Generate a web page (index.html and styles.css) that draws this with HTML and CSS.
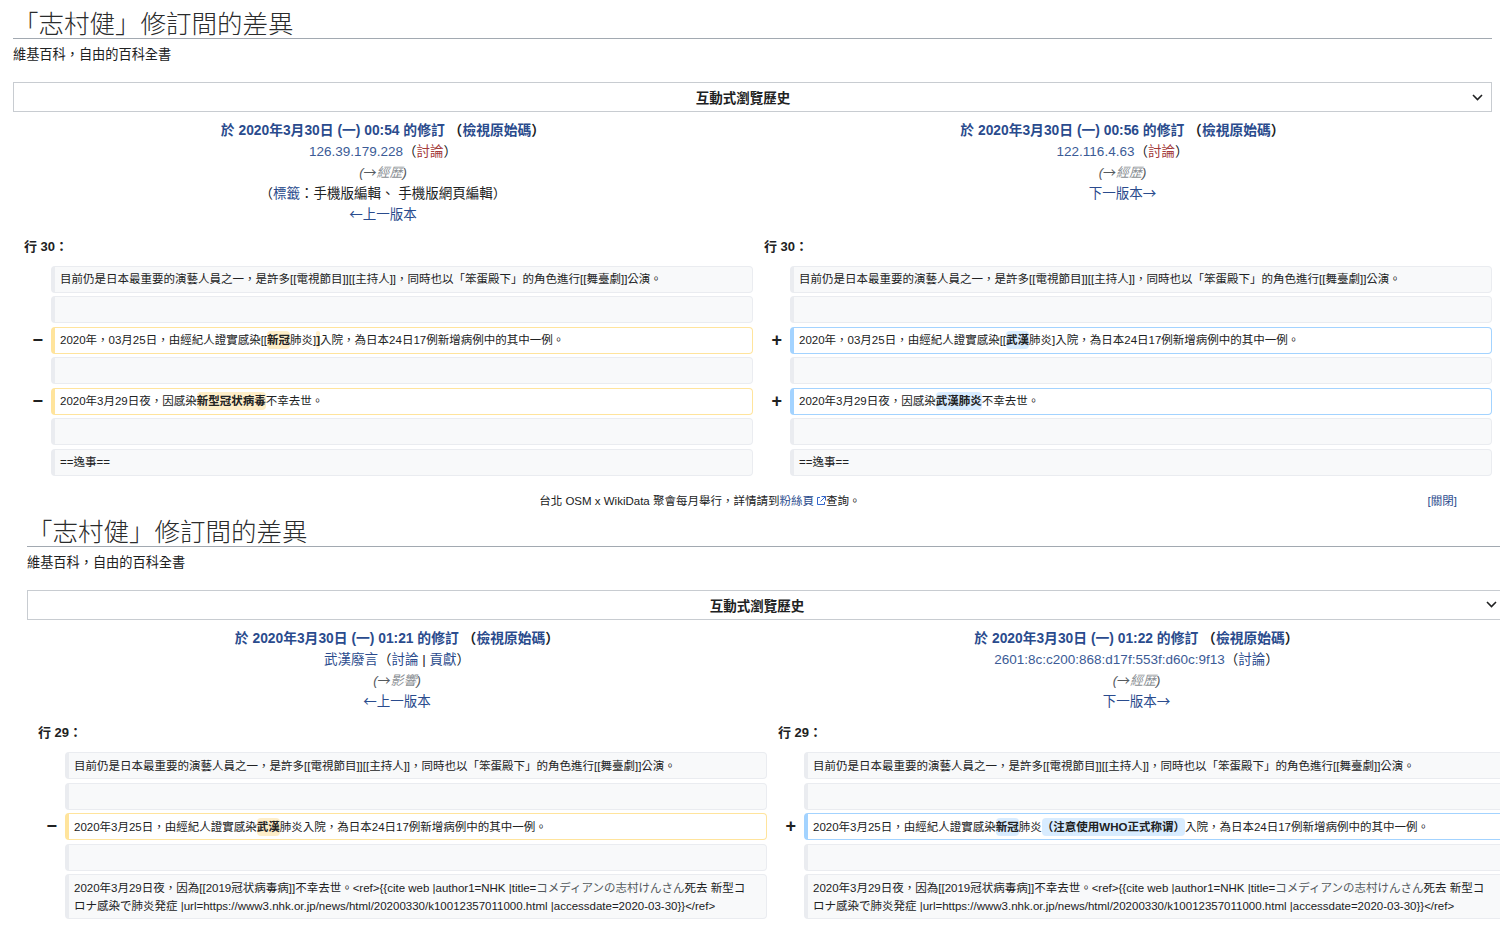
FILE: index.html
```html
<!DOCTYPE html>
<html lang="zh-Hant">
<head>
    <meta charset="UTF-8">
    <title>「志村健」修訂間的差異</title>
    <link rel="stylesheet" href="styles.css">
</head>
<body>
    <!-- first capture -->
    <div class="page page-first">
        <h1 class="title">「志村健」修訂間的差異</h1>
        <div class="tagline">維基百科，自由的百科全書</div>
        <div class="history-box">
            <span class="history-label">互動式瀏覽歷史</span>
            <svg class="chevron" width="11" height="7" viewBox="0 0 11 7"><path d="M1 1l4.5 4.5L10 1" fill="none" stroke="#202122" stroke-width="1.6"/></svg>
        </div>

        <div class="diff-grid diff-head">
            <div class="rev">
                <div class="rev-title"><a class="link">於 2020年3月30日 (一) 00:54 的修訂</a> （<a class="link">檢視原始碼</a>）</div>
                <div><a class="link light">126.39.179.228</a>（<a class="new">討論</a>）</div>
                <div class="summary">(<span class="arr">→</span><span class="section">經歷</span>)</div>
                <div>（<a class="link">標籤</a>：手機版編輯、 手機版網頁編輯）</div>
                <div><a class="link"><span class="arr">←</span>上一版本</a></div>
            </div>
            <div class="rev">
                <div class="rev-title"><a class="link">於 2020年3月30日 (一) 00:56 的修訂</a> （<a class="link">檢視原始碼</a>）</div>
                <div><a class="link light">122.116.4.63</a>（<a class="new">討論</a>）</div>
                <div class="summary">(<span class="arr">→</span><span class="section">經歷</span>)</div>
                <div><a class="link">下一版本<span class="arr">→</span></a></div>
            </div>
        </div>

        <div class="diff-grid">
            <div class="lineno">行 30：</div>
            <div class="lineno">行 30：</div>
        </div>

        <div class="diff-grid diff-rows">
            <div class="marker"></div>
            <div class="cell">目前仍是日本最重要的演藝人員之一，是許多[[電視節目]][[主持人]]，同時也以「笨蛋殿下」的角色進行[[舞臺劇]]公演。</div>
            <div class="marker"></div>
            <div class="cell">目前仍是日本最重要的演藝人員之一，是許多[[電視節目]][[主持人]]，同時也以「笨蛋殿下」的角色進行[[舞臺劇]]公演。</div>

            <div class="marker"></div>
            <div class="cell">&nbsp;</div>
            <div class="marker"></div>
            <div class="cell">&nbsp;</div>

            <div class="marker">−</div>
            <div class="cell del-line">2020年，03月25日，由經紀人證實感染[[<del>新冠</del>肺炎]<del>]</del>入院，為日本24日17例新增病例中的其中一例。</div>
            <div class="marker">+</div>
            <div class="cell add-line">2020年，03月25日，由經紀人證實感染[[<ins>武漢</ins>肺炎]入院，為日本24日17例新增病例中的其中一例。</div>

            <div class="marker"></div>
            <div class="cell">&nbsp;</div>
            <div class="marker"></div>
            <div class="cell">&nbsp;</div>

            <div class="marker">−</div>
            <div class="cell del-line">2020年3月29日夜，因感染<del>新型冠状病毒</del>不幸去世。</div>
            <div class="marker">+</div>
            <div class="cell add-line">2020年3月29日夜，因感染<ins>武漢肺炎</ins>不幸去世。</div>

            <div class="marker"></div>
            <div class="cell">&nbsp;</div>
            <div class="marker"></div>
            <div class="cell">&nbsp;</div>

            <div class="marker"></div>
            <div class="cell">==逸事==</div>
            <div class="marker"></div>
            <div class="cell">==逸事==</div>
        </div>

        <div class="notice">
            <div class="notice-text">台北 OSM x WikiData 聚會每月舉行，詳情請到<a class="link ext">粉絲頁<svg width="10" height="10" viewBox="0 0 10 10"><path d="M4 1.5H1.5v7h7V6" fill="none" stroke="#3366cc" stroke-width="1"/><path d="M5.5 .5h4v4M9.5 .5L4.5 5.5" fill="none" stroke="#3366cc" stroke-width="1"/></svg></a>查詢。</div>
            <a class="link dismiss">[關閉]</a>
        </div>
    </div>

    <!-- second capture -->
    <div class="page page-second">
        <h1 class="title">「志村健」修訂間的差異</h1>
        <div class="tagline">維基百科，自由的百科全書</div>
        <div class="history-box">
            <span class="history-label">互動式瀏覽歷史</span>
            <svg class="chevron" width="11" height="7" viewBox="0 0 11 7"><path d="M1 1l4.5 4.5L10 1" fill="none" stroke="#202122" stroke-width="1.6"/></svg>
        </div>

        <div class="diff-grid diff-head">
            <div class="rev">
                <div class="rev-title"><a class="link">於 2020年3月30日 (一) 01:21 的修訂</a> （<a class="link">檢視原始碼</a>）</div>
                <div><a class="link">武漢廢言</a>（<a class="link">討論</a> | <a class="link">貢獻</a>）</div>
                <div class="summary">(<span class="arr">→</span><span class="section">影響</span>)</div>
                <div><a class="link"><span class="arr">←</span>上一版本</a></div>
            </div>
            <div class="rev">
                <div class="rev-title"><a class="link">於 2020年3月30日 (一) 01:22 的修訂</a> （<a class="link">檢視原始碼</a>）</div>
                <div><a class="link light">2601:8c:c200:868:d17f:553f:d60c:9f13</a>（<a class="link">討論</a>）</div>
                <div class="summary">(<span class="arr">→</span><span class="section">經歷</span>)</div>
                <div><a class="link">下一版本<span class="arr">→</span></a></div>
            </div>
        </div>

        <div class="diff-grid">
            <div class="lineno">行 29：</div>
            <div class="lineno">行 29：</div>
        </div>

        <div class="diff-grid diff-rows">
            <div class="marker"></div>
            <div class="cell">目前仍是日本最重要的演藝人員之一，是許多[[電視節目]][[主持人]]，同時也以「笨蛋殿下」的角色進行[[舞臺劇]]公演。</div>
            <div class="marker"></div>
            <div class="cell">目前仍是日本最重要的演藝人員之一，是許多[[電視節目]][[主持人]]，同時也以「笨蛋殿下」的角色進行[[舞臺劇]]公演。</div>

            <div class="marker"></div>
            <div class="cell">&nbsp;</div>
            <div class="marker"></div>
            <div class="cell">&nbsp;</div>

            <div class="marker">−</div>
            <div class="cell del-line">2020年3月25日，由經紀人證實感染<del>武漢</del>肺炎入院，為日本24日17例新增病例中的其中一例。</div>
            <div class="marker">+</div>
            <div class="cell add-line">2020年3月25日，由經紀人證實感染<ins>新冠</ins>肺炎<ins>（注意使用WHO正式称谓）</ins>入院，為日本24日17例新增病例中的其中一例。</div>

            <div class="marker"></div>
            <div class="cell">&nbsp;</div>
            <div class="marker"></div>
            <div class="cell">&nbsp;</div>

            <div class="marker"></div>
            <div class="cell cite">2020年3月29日夜，因為[[2019冠状病毒病]]不幸去世。&lt;ref&gt;{{cite web |author1=NHK |title=<span class="ja">コメディアンの志村けんさん</span>死去 新型コロナ感染で肺炎発症 |url=https://www3.nhk.or.jp/news/html/20200330/k10012357011000.html |accessdate=2020-03-30}}&lt;/ref&gt;</div>
            <div class="marker"></div>
            <div class="cell cite">2020年3月29日夜，因為[[2019冠状病毒病]]不幸去世。&lt;ref&gt;{{cite web |author1=NHK |title=<span class="ja">コメディアンの志村けんさん</span>死去 新型コロナ感染で肺炎発症 |url=https://www3.nhk.or.jp/news/html/20200330/k10012357011000.html |accessdate=2020-03-30}}&lt;/ref&gt;</div>
        </div>
    </div>
</body>
</html>
```

FILE: styles.css
```css
body {
    margin: 0;
    font-family: "Liberation Sans", "Noto Sans CJK TC", sans-serif;
    color: #202122;
    background: #fff;
    overflow: hidden;
}
.page {
    width: 1479px;
}
.page-first {
    margin-left: 13px;
}
.page-second {
    margin-left: 27px;
}
.title {
    font-family: "Noto Sans CJK TC", sans-serif;
    font-size: 25.5px;
    font-weight: 300;
    line-height: 32px;
    margin: 6px 0 0;
    color: #2a2b2c;
    border-bottom: 1px solid #a2a9b1;
}
.page-second .title {
    margin-top: 3px;
}
.tagline {
    font-size: 13.2px;
    line-height: 18px;
    margin-top: 7px;
}
.history-box {
    margin-top: 18px;
    height: 30px;
    box-sizing: border-box;
    border: 1px solid #c8ccd1;
    display: flex;
    align-items: center;
}
.history-label {
    flex: 1;
    text-align: center;
    font-weight: bold;
    font-size: 13.5px;
}
.chevron {
    margin-right: 8px;
}
.diff-grid {
    display: grid;
    grid-template-columns: 38px 702px 37px 702px;
}
.diff-head {
    margin-top: 8px;
    font-size: 13.5px;
    line-height: 21px;
    text-align: center;
}
.diff-head .rev > div {
    height: 21px;
    overflow: visible;
}
.rev {
    grid-column: span 2;
}
.rev-title {
    font-weight: bold;
    font-size: 13.8px;
}
.link {
    color: #2a4b8d;
    text-decoration: none;
}
.link.light {
    color: #3b5b96;
}
.new {
    color: #a33a3a;
}
.arr {
    font-family: "Noto Sans CJK TC", sans-serif;
    font-style: normal;
    line-height: 0;
}
.summary {
    font-style: italic;
    font-size: 13px;
    color: #54595d;
}
.section {
    color: #8a8f94;
}
.lineno {
    grid-column: span 2;
    font-weight: bold;
    font-size: 13px;
    line-height: 21px;
    padding-left: 11px;
    margin-top: 10.5px;
}
.diff-rows {
    margin-top: 9px;
    row-gap: 3.5px;
}
.marker {
    text-align: right;
    padding-right: 8px;
    font-weight: bold;
    font-size: 18px;
    line-height: 27px;
}
.cell {
    box-sizing: border-box;
    min-height: 27px;
    padding: 3.5px 8px 3.5px 5px;
    font-size: 11.5px;
    line-height: 18px;
    background: #f8f9fa;
    border: 1px solid #eaecf0;
    border-left-width: 4px;
    border-radius: 4px;
    overflow-wrap: anywhere;
}
.cell.cite {
    padding-right: 14px;
}
.cell.del-line {
    background: #fff;
    border-color: #ffe49c;
}
.cell.add-line {
    background: #fff;
    border-color: #a3d3ff;
}
del, ins {
    font-weight: bold;
    text-decoration: none;
    border-radius: 4px;
    padding: 3px 0;
}
del {
    background: #feeec8;
}
ins {
    background: #d8ecff;
}
.ja {
    color: #54595d;
}
.notice {
    display: flex;
    margin-top: 15px;
    padding-right: 35px;
    font-size: 11.5px;
    line-height: 20px;
}
.notice-text {
    flex: 1;
    text-align: center;
    margin-right: 41px;
}
.ext svg {
    margin-left: 2px;
    vertical-align: -1px;
}
.dismiss {
    font-size: 11.5px;
}
```
